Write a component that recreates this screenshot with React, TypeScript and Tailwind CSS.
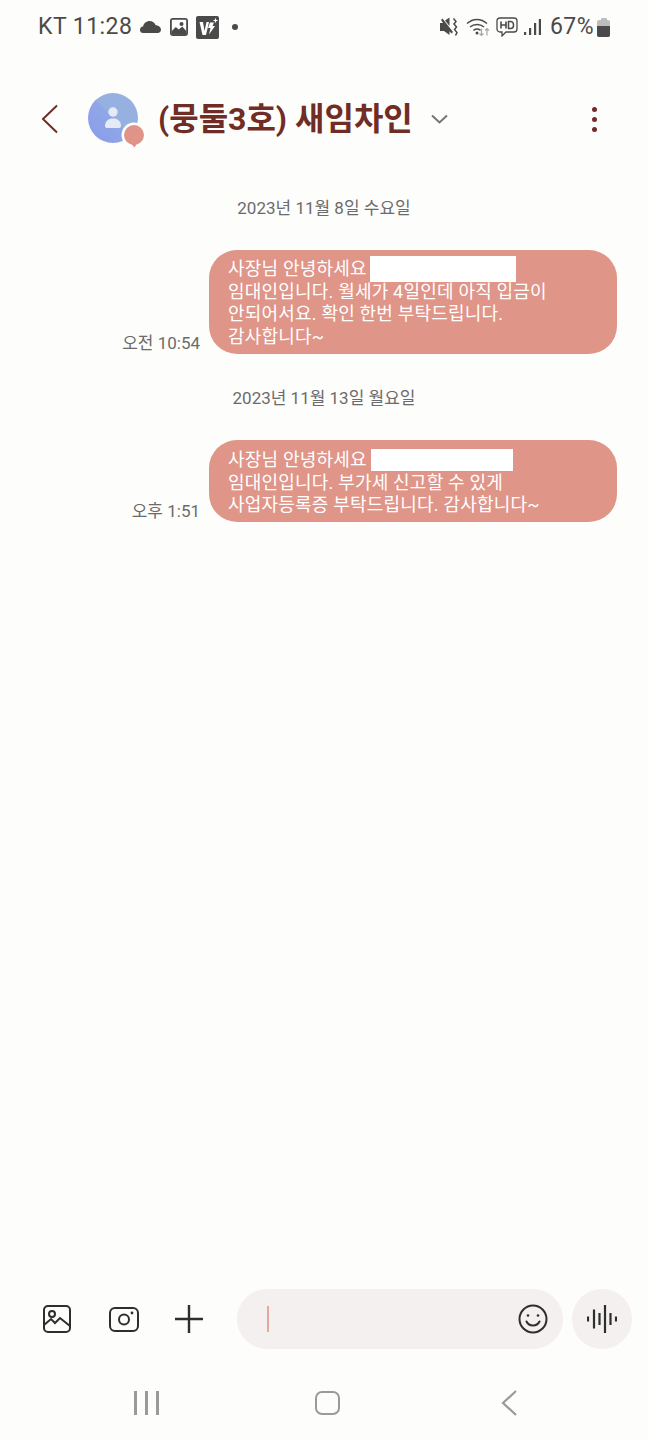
const Status = () => (
  <div className="flex h-[54px] items-center justify-between pl-[38px] pr-[38px] text-[23px] tracking-[0.45px] text-[#4a4a4a]">
    <div className="flex items-center">
      <span>KT 11:28</span>
      <svg width="21" height="12" viewBox="0 0 21 12" className="ml-[8px]" fill="#4a4a4a">
        <path d="M0 9a3.500 3.500 0 0 1 3-3.400C3.700 2.200 6.500 0 9.500 0c3 0 5.300 1.700 6.200 4.200C18.700 4.300 21 6.300 21 8.800 21 10.700 19.500 12 17.800 12H3C1.300 12 0 10.700 0 9z" />
      </svg>
      <svg width="18" height="18" viewBox="0 0 18 18" className="ml-[9px]">
        <rect width="18" height="18" rx="3" fill="#4a4a4a" />
        <rect x="1.800" y="1.800" width="14.400" height="14.400" rx="1" fill="#fff" />
        <path d="M1.800 13l4-4 3 2.500 3.500-3 3.900 4.500v3.700H1.800z" fill="#4a4a4a" />
        <circle cx="11.500" cy="6" r="2" fill="#4a4a4a" />
      </svg>
      <svg width="23" height="23" viewBox="0 0 23 23" className="ml-[8px]">
        <rect width="23" height="23" rx="2" fill="#4a4a4a" />
        <path d="M3.500 6h3.500l1.500 9 2-9h2.500l-3 13H6.500z" fill="#fff" />
        <path d="M14 6.500h4l-1.500 3.500h2.500l-6 8.500 1.500-6.500h-2.500z" fill="#fff" />
        <path d="M19.500 2.500v4M17.500 4.500h4" stroke="#fff" strokeWidth="1.200" />
      </svg>
      <span className="ml-[13px] h-[6px] w-[6px] rounded-full bg-[#4a4a4a]" />
    </div>
    <div className="flex items-center">
      <svg width="19" height="20" viewBox="0 0 19 20" fill="#4a4a4a">
        <path d="M0 6h3L1 3l1.500-1.500L13 15l-1.500 1.500-2-2.300V18L4 14H0V6zM5 3.500L9.500 0.500v8.500z" />
        <path d="M13.500 1.500l2.500 3-2 2.500 2.500 3-2 2.500 2.500 3-1.500 3" fill="none" stroke="#4a4a4a" strokeWidth="1.500" />
      </svg>
      <svg width="24" height="18" viewBox="0 0 24 18" className="ml-[7px]" fill="none">
        <path d="M1 5.500c6-5.500 14-5.500 20 0" stroke="#4a4a4a" strokeWidth="1.500" />
        <path d="M4 9c4-3.300 10-3.300 14 0" stroke="#4a4a4a" strokeWidth="1.500" />
        <path d="M7.500 12.300c2-1.500 5-1.500 7 0" stroke="#4a4a4a" strokeWidth="1.500" />
        <circle cx="11" cy="15" r="1.500" fill="#4a4a4a" />
        <path d="M15.500 10.500v7M13.500 15.500l2 2 2-2" stroke="#a8a8a8" strokeWidth="1.200" />
        <path d="M21 17.500v-7M19 12.500l2-2 2 2" stroke="#a8a8a8" strokeWidth="1.200" />
      </svg>
      <svg width="22" height="20" viewBox="0 0 22 20" className="ml-[6px]" fill="none">
        <path d="M4 1h14a3 3 0 0 1 3 3v8a3 3 0 0 1-3 3H10l-4 4v-4H4a3 3 0 0 1-3-3V4a3 3 0 0 1 3-3z" stroke="#4a4a4a" strokeWidth="1.300" />
        <path d="M5 4.500v7M10 4.500v7M5 8h5" stroke="#4a4a4a" strokeWidth="1.600" />
        <path d="M12.500 4.500v7h2a3 3 0 0 0 3-3v-1a3 3 0 0 0-3-3h-2z" stroke="#4a4a4a" strokeWidth="1.500" />
      </svg>
      <svg width="17" height="18" viewBox="0 0 17 18" className="ml-[6px]" fill="#4a4a4a">
        <rect x="0" y="14" width="2.200" height="3" />
        <rect x="5" y="10" width="2.200" height="7" />
        <rect x="10" y="5" width="2.200" height="12" />
        <rect x="14.800" y="1" width="2.200" height="16" />
      </svg>
      <span className="ml-[9px]">67%</span>
      <div className="ml-[3px] flex w-[13px] flex-col items-center">
        <div className="h-[2px] w-[6px] rounded-t-[1px] bg-[#bdbdbd]" />
        <div className="h-[17px] w-[13px] overflow-hidden rounded-[2px] bg-[#bdbdbd]">
          <div className="mt-[6px] h-[11px] bg-[#4a4a4a]" />
        </div>
      </div>
    </div>
  </div>
);

const Header = () => (
  <div className="mt-[35px] flex h-[60px] items-center pl-[41px] pr-[51px]">
    <svg width="18" height="30" viewBox="0 0 18 30" fill="none">
      <path d="M16 1.500L2 15l14 13.500" stroke="#6f2d25" strokeWidth="2" />
    </svg>
    <div className="relative mb-[2px] ml-[29px] h-[50px] w-[50px] rounded-full bg-[linear-gradient(45deg,#8a9cec_0%,#8fa6e6_48%,#96b0e0_52%,#96b0e0_100%)]">
      <svg width="50" height="50" viewBox="0 0 50 50">
        <circle cx="25" cy="19" r="4.700" fill="#e6e9f6" />
        <path d="M17 33c0-5 3.500-7.500 8-7.500s8 2.500 8 7.500c0 1.500-1 2-2.500 2h-11C18 35 17 34.500 17 33z" fill="#e6e9f6" />
      </svg>
      <svg width="26" height="27" viewBox="-1 -1 26 27" className="absolute -bottom-[6px] -right-[9px]">
        <circle cx="12" cy="12" r="12.500" fill="#fff" />
        <circle cx="12" cy="12" r="10" fill="#e09488" />
        <path d="M9 20.500l3.500 4 2.500-4z" fill="#e09488" />
      </svg>
    </div>
    <span className="ml-[20px] text-[32px] font-bold leading-[40px] text-[#6f2d25]">(뭉둘3호) 새임차인</span>
    <svg width="17" height="10" viewBox="0 0 17 10" fill="none" className="ml-[18px]">
      <path d="M1 1.500L8.500 8.500 16 1.500" stroke="#757575" strokeWidth="2" />
    </svg>
    <div className="ml-auto flex flex-col gap-[5px]">
      <span className="h-[5px] w-[5px] rounded-full bg-[#6f2d25]" />
      <span className="h-[5px] w-[5px] rounded-full bg-[#6f2d25]" />
      <span className="h-[5px] w-[5px] rounded-full bg-[#6f2d25]" />
    </div>
  </div>
);

export default function App() {
  return (
    <div className="flex h-[1440px] w-[648px] flex-col overflow-hidden bg-[#fdfdfb] font-['Roboto','Noto_Sans_CJK_KR',sans-serif]">
      <Status />
      <Header />

      <div className="mt-[47px] flex-1">
        <p className="text-center text-[17px] leading-[24px] text-[#6b6b6b]">2023년 11월 8일 수요일</p>
        <div className="mr-[31px] mt-[30px] flex items-end justify-end">
          <span className="-mb-[1px] mr-[9px] text-[17px] leading-[24px] text-[#6b6b6b]">오전 10:54</span>
          <div className="h-[104px] w-[408px] rounded-[28px] bg-[#e09589] px-[19px] pt-[7px] text-[18px] leading-[22.400px] tracking-[0.2px] text-white">
            <div className="flex h-[24px] items-center">사장님 안녕하세요<span className="ml-[3px] h-[26px] w-[146px] bg-white" /></div>
            <div>임대인입니다. 월세가 4일인데 아직 입금이</div>
            <div>안되어서요. 확인 한번 부탁드립니다.</div>
            <div>감사합니다~</div>
          </div>
        </div>

        <p className="mt-[32px] text-center text-[17px] leading-[24px] text-[#6b6b6b]">2023년 11월 13일 월요일</p>
        <div className="mr-[31px] mt-[30px] flex items-end justify-end">
          <span className="-mb-[1px] mr-[9px] text-[17px] leading-[24px] text-[#6b6b6b]">오후 1:51</span>
          <div className="h-[82px] w-[408px] rounded-[28px] bg-[#e09589] px-[19px] pt-[8px] text-[18px] leading-[22.400px] tracking-[0.2px] text-white">
            <div className="flex h-[24px] items-center">사장님 안녕하세요<span className="ml-[4px] h-[22px] w-[142px] bg-white" /></div>
            <div>임대인입니다. 부가세 신고할 수 있게</div>
            <div>사업자등록증 부탁드립니다. 감사합니다~</div>
          </div>
        </div>
      </div>

      <div className="flex h-[60px] items-center pl-[43px] pr-[16px]">
        <svg width="28" height="28" viewBox="0 0 28 28" fill="none" stroke="#2e2e2e" strokeWidth="2">
          <rect x="1" y="1" width="26" height="26" rx="4" />
          <circle cx="9" cy="9" r="3" />
          <path d="M1 20l7-6 4 4 5-5 10 8" />
        </svg>
        <svg width="30" height="25" viewBox="0 0 30 25" fill="none" stroke="#2e2e2e" strokeWidth="2" className="ml-[38px]">
          <rect x="1" y="1" width="28" height="23" rx="5" />
          <circle cx="15" cy="12.500" r="5" />
          <circle cx="23" cy="6" r="1.400" fill="#2e2e2e" stroke="none" />
        </svg>
        <svg width="28" height="28" viewBox="0 0 28 28" stroke="#2e2e2e" strokeWidth="2.400" className="ml-[36px]">
          <path d="M14 0v28M0 14h28" />
        </svg>
        <div className="ml-[34px] flex h-[60px] w-[326px] items-center rounded-full bg-[#f3f0ef] pl-[30px] pr-[15px]">
          <span className="h-[26px] w-[1.500px] bg-[#e6a79d]" />
          <svg width="30" height="30" viewBox="0 0 30 30" fill="none" className="ml-auto" stroke="#2e2e2e" strokeWidth="2">
            <circle cx="15" cy="15" r="13.500" />
            <circle cx="10" cy="11.500" r="1.300" fill="#2e2e2e" stroke="none" />
            <circle cx="20" cy="11.500" r="1.300" fill="#2e2e2e" stroke="none" />
            <path d="M8.500 17.500c1.500 3 4 4 6.500 4s5-1 6.500-4" strokeLinecap="round" />
          </svg>
        </div>
        <div className="ml-[9px] flex h-[60px] w-[60px] items-center justify-center rounded-full bg-[#f3f0ef]">
          <svg width="30" height="28" viewBox="0 0 30 28" stroke="#2e2e2e" strokeWidth="2.200">
            <path d="M1 11.500v5M7 4.500v19M12.500 8v12M18 0v28M23.500 8v12M29 11.500v5" />
          </svg>
        </div>
      </div>

      <div className="mb-[24px] mt-[41px] flex h-[26px] items-center">
        <div className="ml-[134px] flex gap-[8.500px]">
          <span className="h-[24px] w-[2.500px] bg-[#9a9a9a]" />
          <span className="h-[24px] w-[2.500px] bg-[#9a9a9a]" />
          <span className="h-[24px] w-[2.500px] bg-[#9a9a9a]" />
        </div>
        <span className="ml-[156px] h-[24px] w-[25px] rounded-[7px] border-[2.500px] border-[#9a9a9a]" />
        <svg width="16" height="26" viewBox="0 0 16 26" fill="none" className="ml-[161px]">
          <path d="M15 1L2 13l13 12" stroke="#9a9a9a" strokeWidth="2.200" />
        </svg>
      </div>
    </div>
  );
}
